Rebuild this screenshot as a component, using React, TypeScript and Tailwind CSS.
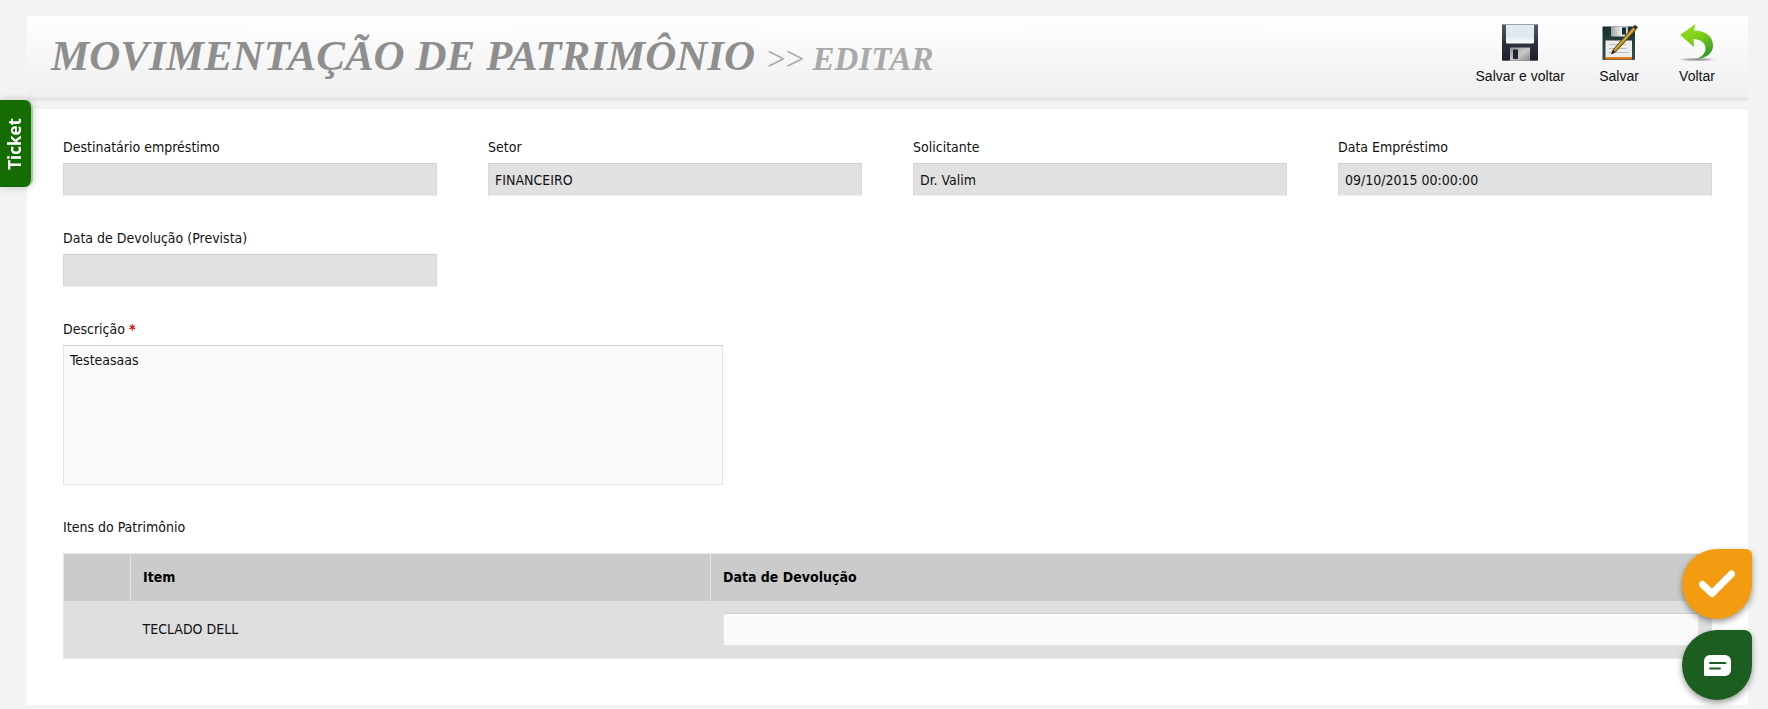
import React, { useId, useState } from 'react';

interface FieldProps {
    label: string;
    value: string;
}

const Field: React.FC<FieldProps> = ({ label, value }) => {
    const id = useId();

    return (
        <div className="flex flex-col">
            <label htmlFor={id} className="mb-1.5 leading-5">
                {label}
            </label>
            <input
                id={id}
                type="text"
                value={value}
                readOnly
                className="h-[33px] w-full border border-[#d8d8d8] border-t-[#cfcfcf] border-b-[#ececec] bg-[#e1e1e1] px-1.5 outline-none"
            />
        </div>
    );
};

interface ToolButtonProps {
    label: string;
    children: React.ReactNode;
}

const ToolButton: React.FC<ToolButtonProps> = ({ label, children }) => (
    <button
        type="button"
        className="flex min-w-12 flex-col items-center font-['Liberation_Sans',Arial,sans-serif] text-sm leading-5 text-[#111] cursor-pointer"
    >
        {children}
        <span className="mt-1">{label}</span>
    </button>
);

const FloppyIcon = () => (
    <svg viewBox="0 0 40 40" className="h-10 w-10" aria-hidden="true">
        <defs>
            <linearGradient id="floppy-body" x1="0" y1="0" x2="0" y2="1">
                <stop offset="0" stopColor="#555866" />
                <stop offset="0.5" stopColor="#2f3242" />
                <stop offset="1" stopColor="#1b1d2b" />
            </linearGradient>
            <linearGradient id="floppy-label" x1="0" y1="0" x2="0" y2="1">
                <stop offset="0" stopColor="#e4ebf2" />
                <stop offset="0.6" stopColor="#dfe7ef" />
                <stop offset="1" stopColor="#f8fbfd" />
            </linearGradient>
            <linearGradient id="floppy-metal" x1="0" y1="0" x2="1" y2="1">
                <stop offset="0" stopColor="#8e8e8e" />
                <stop offset="0.5" stopColor="#c9c9c9" />
                <stop offset="1" stopColor="#8a8a8a" />
            </linearGradient>
        </defs>
        <path d="M2 3a1 1 0 0 1 1-1h34a1 1 0 0 1 1 1v35a1 1 0 0 1-1 1H3a1 1 0 0 1-1-1z" fill="url(#floppy-body)" />
        <path d="M6 2.500h28v17.500a1.500 1.500 0 0 1-1.500 1.500h-25A1.500 1.500 0 0 1 6 20z" fill="url(#floppy-label)" />
        <path d="M3 2.500h34" stroke="#9aa0aa" />
        <path d="M10 25.500h20V39H10z" fill="url(#floppy-metal)" />
        <rect x="13" y="27.500" width="5" height="9.500" fill="#222433" />
        <path d="M2 38.500h36" stroke="#8d8f98" strokeOpacity="0.6" />
    </svg>
);

const FloppyEditIcon = () => (
    <svg viewBox="0 0 40 40" className="h-10 w-10" aria-hidden="true">
        <defs>
            <linearGradient id="edit-body" x1="0" y1="0" x2="0" y2="1">
                <stop offset="0" stopColor="#16302f" />
                <stop offset="1" stopColor="#35504e" />
            </linearGradient>
            <linearGradient id="edit-shutter" x1="0" y1="0" x2="1" y2="0">
                <stop offset="0" stopColor="#9da3a3" />
                <stop offset="0.6" stopColor="#eceeee" />
                <stop offset="1" stopColor="#c2c6c6" />
            </linearGradient>
        </defs>
        <path d="M3.500 4.500H35a1 1 0 0 1 1 1V37a1 1 0 0 1-1 1H3.500z" fill="url(#edit-body)" />
        <path d="M12 4.500h17v10H12z" fill="url(#edit-shutter)" />
        <rect x="23" y="5.500" width="4" height="7" fill="#1d2c2c" />
        <rect x="6.500" y="18.500" width="26.500" height="17" fill="#eceded" />
        <path d="M10 22.500h17M10 26.500h17M10 30.500h20" stroke="#b9bdbd" />
        <rect x="6.500" y="35" width="26.500" height="2.500" fill="#e27a1c" />
        <path d="M12.500 32l1.500-4L34 5l3 2.500L16.500 30z" fill="#b98d24" stroke="#4c390f" strokeWidth="0.900" />
        <path d="M15 28.500L35.500 6.300" stroke="#ecca62" strokeWidth="0.800" />
        <path d="M12.500 32l1.500-4 2.200 1.800z" fill="#222" />
        <path d="M34 5l2-2.300 3 2.500L37 7.500z" fill="#3b2c2c" />
    </svg>
);

const BackIcon = () => (
    <svg viewBox="0 0 40 40" className="h-10 w-10" aria-hidden="true">
        <defs>
            <linearGradient id="back-arrow" x1="0" y1="0" x2="0.600" y2="1">
                <stop offset="0" stopColor="#9be023" />
                <stop offset="0.5" stopColor="#7fd019" />
                <stop offset="1" stopColor="#3c9a2c" />
            </linearGradient>
            <radialGradient id="back-shadow">
                <stop offset="0" stopColor="#666" stopOpacity="0.700" />
                <stop offset="0.7" stopColor="#888" stopOpacity="0.500" />
                <stop offset="1" stopColor="#999" stopOpacity="0" />
            </radialGradient>
        </defs>
        <ellipse cx="20" cy="37.500" rx="18.500" ry="1.800" fill="url(#back-shadow)" />
        <path
            d="M3 13L18.500 2l-1.500 6.500C28 8.500 36 14 36 23.500c0 8-6.500 12.500-17 14 6-2.500 9.500-6.500 9.500-11 0-5.500-4.500-9-12-9.500l.5 8z"
            fill="url(#back-arrow)"
        />
    </svg>
);

const CheckIcon = () => (
    <svg viewBox="0 0 36 28" className="h-7 w-9" fill="none" aria-hidden="true">
        <path d="M3.500 14.500l9.500 9L32.500 4" stroke="#fff" strokeWidth="7" strokeLinecap="round" strokeLinejoin="round" />
    </svg>
);

const ChatIcon = () => (
    <svg viewBox="0 0 27 21" className="h-[21px] w-[27px]" fill="none" aria-hidden="true">
        <path d="M6 0h15a6 6 0 0 1 6 6v9a6 6 0 0 1-6 6H1.500A1.500 1.500 0 0 1 0 19.500V6a6 6 0 0 1 6-6z" fill="#fff" />
        <path d="M6 8h15.500M6 13.500h10" stroke="#1b5e20" strokeWidth="1.800" strokeLinecap="round" />
    </svg>
);

const items = [{ name: 'TECLADO DELL' }];

export default function App() {
    const [description, setDescription] = useState('Testeasaas');
    const [returnDates, setReturnDates] = useState<string[]>(items.map(() => ''));

    return (
        <div className="min-h-screen bg-[#f3f3f3] pt-4 pr-5 pb-1 pl-[27px] font-['DejaVu_Sans_Condensed','Noto_Sans',sans-serif] text-sm text-[#111]">
            {/* Title bar */}
            <header className="mb-2 flex h-[85px] items-start justify-between border-b-4 border-[#e7e7e7] bg-linear-to-b from-white to-[#efefef] pr-[27px] pl-6">
                <h1 className="flex items-baseline gap-3 pt-4 font-['Liberation_Serif',serif] text-[43px] leading-[48px] font-bold text-[#8e8e8e] italic">
                    MOVIMENTAÇÃO DE PATRIMÔNIO
                    <small className="text-[33px] text-[#a9a9a9]">
                        <span className="font-normal not-italic">&gt;&gt;</span> EDITAR
                    </small>
                </h1>
                <div className="flex gap-[30px] pt-1.5">
                    <ToolButton label="Salvar e voltar">
                        <FloppyIcon />
                    </ToolButton>
                    <ToolButton label="Salvar">
                        <FloppyEditIcon />
                    </ToolButton>
                    <ToolButton label="Voltar">
                        <BackIcon />
                    </ToolButton>
                </div>
            </header>

            {/* Form */}
            <main className="bg-white px-9 pt-7 pb-[46px]">
                <form className="flex flex-col gap-8" onSubmit={(e) => e.preventDefault()}>
                    <div className="grid grid-cols-4 gap-x-[51px] gap-y-8">
                        <Field label="Destinatário empréstimo" value="" />
                        <Field label="Setor" value="FINANCEIRO" />
                        <Field label="Solicitante" value="Dr. Valim" />
                        <Field label="Data Empréstimo" value="09/10/2015 00:00:00" />
                        <Field label="Data de Devolução (Prevista)" value="" />
                    </div>

                    <div className="flex flex-col">
                        <label htmlFor="description" className="mb-1.5 leading-5">
                            Descrição <span className="font-bold text-[#d90000]">*</span>
                        </label>
                        <textarea
                            id="description"
                            value={description}
                            onChange={(e) => setDescription(e.target.value)}
                            className="h-[140px] w-2/5 resize-none border border-[#e2e2e2] border-t-[#d2d2d2] bg-[#fafafa] px-1.5 py-1 leading-5 outline-none"
                        />
                    </div>

                    <div>
                        <h2 id="items-title" className="mb-4 leading-5">
                            Itens do Patrimônio
                        </h2>
                        <table aria-labelledby="items-title" className="w-full table-fixed border-collapse border border-[#e6e6e6] text-left">
                            <thead>
                                <tr className="h-[47px] bg-[#cbcbcb] text-black">
                                    <th className="w-[67px] border-r border-[#e2e2e2]" />
                                    <th className="w-[580px] border-r border-[#e2e2e2] px-3 font-bold">Item</th>
                                    <th className="px-3 font-bold">Data de Devolução</th>
                                </tr>
                            </thead>
                            <tbody>
                                {items.map((item, i) => (
                                    <tr key={item.name} className="h-[58px] bg-[#dfdfdf]">
                                        <td />
                                        <td className="px-3">{item.name}</td>
                                        <td className="px-3">
                                            <input
                                                type="text"
                                                aria-label="Data de Devolução"
                                                value={returnDates[i]}
                                                onChange={(e) => setReturnDates(returnDates.map((d, n) => (n === i ? e.target.value : d)))}
                                                className="block h-[33px] w-full border border-[#e4e4e4] border-t-[#d2d2d2] bg-[#fafafa] px-1.5 outline-none"
                                            />
                                        </td>
                                    </tr>
                                ))}
                            </tbody>
                        </table>
                    </div>
                </form>
            </main>

            {/* Ticket tab */}
            <button
                type="button"
                className="fixed top-[100px] left-0 flex h-[87px] w-[33px] cursor-pointer items-center justify-center rounded-r-lg border-r-2 border-[#a5c9a0] bg-[#146c03] pr-0.5 shadow-[0_0_8px_rgba(0,0,0,0.2)]"
            >
                <span className="rotate-180 font-['Open_Sans',sans-serif] text-[17px] leading-5 font-bold text-white [writing-mode:vertical-rl]">
                    Ticket
                </span>
            </button>

            {/* Floating actions */}
            <div className="fixed right-4 bottom-[9px] flex flex-col gap-[11px]">
                <button
                    type="button"
                    aria-label="Tarefas"
                    className="flex h-[70px] w-[70px] cursor-pointer items-center justify-center rounded-[35px] rounded-tr-md bg-[#f39c12] shadow-[0_3px_6px_rgba(0,0,0,0.4)]"
                >
                    <CheckIcon />
                </button>
                <button
                    type="button"
                    aria-label="Chat"
                    className="flex h-[70px] w-[70px] cursor-pointer items-center justify-center rounded-[35px] rounded-tr-lg bg-[#1b5e20] shadow-[0_3px_6px_rgba(0,0,0,0.4)]"
                >
                    <ChatIcon />
                </button>
            </div>
        </div>
    );
}
